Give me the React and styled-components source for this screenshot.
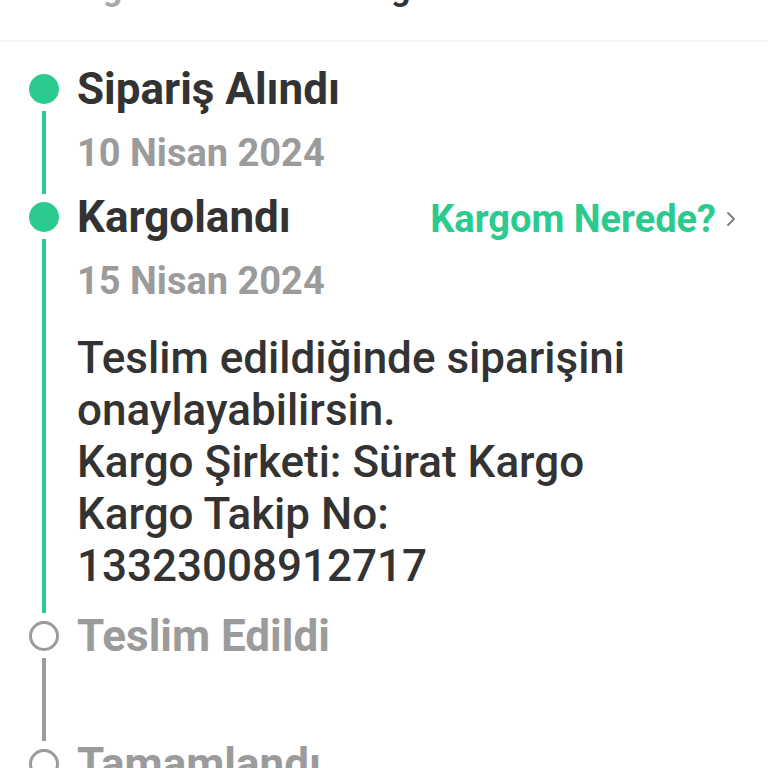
import React from 'react';
import styled, { createGlobalStyle } from 'styled-components';

const GREEN = '#2bcb8f';
const DARK = '#333333';
const GREY = '#9b9b9b';

const GlobalStyle = createGlobalStyle`
  html, body {
    margin: 0;
    padding: 0;
    background: #ffffff;
    font-family: Roboto, "Noto Sans", "Liberation Sans", sans-serif;
  }
`;

const Page = styled.div`
  width: 768px;
  height: 768px;
  overflow: hidden;
  background: #ffffff;
`;

const Header = styled.div`
  height: 40px;
  overflow: hidden;
  border-bottom: 2px solid #f4f4f4;
`;

const HeaderInner = styled.div`
  display: flex;
  gap: 168px;
  padding-left: 63px;
  margin-top: -29px;
  font-size: 34px;
  font-weight: 700;
  line-height: 34px;
`;

const HeaderLabel = styled.span`
  color: ${p => (p.$active ? DARK : '#a8a8a8')};
`;

const Timeline = styled.div`
  padding: 15px 32px 0 29px;
`;

const Step = styled.div`
  display: flex;
  gap: 18px;
`;

const Rail = styled.div`
  width: 30px;
  flex: none;
  display: flex;
  flex-direction: column;
  align-items: center;
`;

const Dot = styled.div`
  width: 30px;
  height: 30px;
  margin-top: 17px;
  box-sizing: border-box;
  border-radius: 50%;
  flex: none;
  background: ${p => (p.$done ? GREEN : '#ffffff')};
  border: ${p => (p.$done ? 'none' : `3px solid ${GREY}`)};
`;

const Connector = styled.div`
  width: 4px;
  flex: 1;
  margin: 7px 0 -9px;
  background: ${p => (p.$done ? GREEN : GREY)};
`;

const Body = styled.div`
  flex: 1;
  min-width: 0;
`;

const TitleRow = styled.div`
  height: 64px;
  display: flex;
  align-items: center;
  justify-content: space-between;
  padding-top: ${p => p.$shift || 0}px;
  box-sizing: border-box;
`;

const Title = styled.div`
  font-size: 44px;
  font-weight: 700;
  color: ${p => (p.$muted ? GREY : DARK)};
`;

const TrackLink = styled.a`
  display: flex;
  align-items: center;
  gap: 10px;
  margin-top: 4px;
  font-size: 38px;
  font-weight: 700;
  color: ${GREEN};
  text-decoration: none;
`;

const DateLine = styled.div`
  height: 64px;
  display: flex;
  align-items: center;
  font-size: 38px;
  font-weight: 700;
  color: ${GREY};
`;

const Note = styled.div`
  padding: 19px 0 12px;
  font-size: 44px;
  font-weight: 500;
  line-height: 52px;
  color: ${DARK};
`;

const Chevron = () => (
  <svg width="10" height="16" viewBox="0 0 10 16" fill="none">
    <path d="M2 2l6 6-6 6" stroke="#7a7a7a" strokeWidth="1.8" strokeLinecap="round" strokeLinejoin="round" />
  </svg>
);

const steps = [
  { title: 'Sipariş Alındı', date: '10 Nisan 2024', done: true, lineDone: true },
  {
    title: 'Kargolandı',
    date: '15 Nisan 2024',
    done: true,
    lineDone: true,
    link: 'Kargom Nerede?',
    note: [
      'Teslim edildiğinde siparişini',
      'onaylayabilirsin.',
      'Kargo Şirketi: Sürat Kargo',
      'Kargo Takip No:',
      '13323008912717',
    ],
  },
  { title: 'Teslim Edildi', date: '', done: false, lineDone: false },
  { title: 'Tamamlandı', date: '', done: false, last: true },
];

const App = () => (
  <Page>
    <GlobalStyle />
    <Header>
      <HeaderInner>
        <HeaderLabel>Bilgiler</HeaderLabel>
        <HeaderLabel $active>Kargo Takibi</HeaderLabel>
      </HeaderInner>
    </Header>
    <Timeline>
      {steps.map((s, i) => (
        <Step key={i}>
          <Rail>
            <Dot $done={s.done} />
            {!s.last && <Connector $done={s.lineDone} />}
          </Rail>
          <Body>
            <TitleRow>
              <Title $muted={!s.done}>{s.title}</Title>
              {s.link && (
                <TrackLink href="#">
                  {s.link}
                  <Chevron />
                </TrackLink>
              )}
            </TitleRow>
            <DateLine>{s.date}</DateLine>
            {s.note && (
              <Note>
                {s.note.map((l, j) => (
                  <div key={j}>{l}</div>
                ))}
              </Note>
            )}
          </Body>
        </Step>
      ))}
    </Timeline>
  </Page>
);

export default App;
